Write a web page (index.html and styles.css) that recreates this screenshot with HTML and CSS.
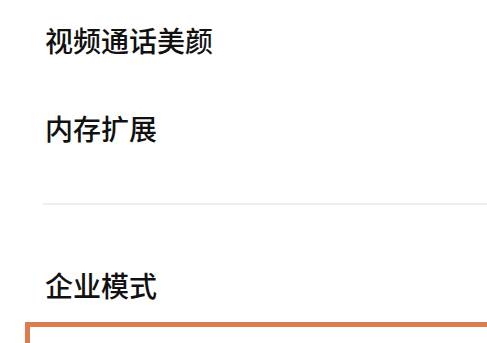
FILE: index.html
```html
<!DOCTYPE html>
<html lang="zh-CN">
<head>
<meta charset="utf-8">
<link rel="stylesheet" href="styles.css">
</head>
<body>
<div class="list">
  <div class="item item-first">视频通话美颜</div>
  <div class="item item-second">内存扩展</div>
  <div class="divider"></div>
  <div class="item item-third">企业模式</div>
  <div class="highlight"></div>
</div>
</body>
</html>
```
FILE: styles.css
```css
html, body {
  margin: 0;
  padding: 0;
  background: #ffffff;
  overflow: hidden;
}
.list {
  width: 487px;
  height: 343px;
  overflow: hidden;
  font-family: "Noto Sans CJK SC", "Noto Sans", sans-serif;
  color: #111111;
}
.item {
  height: 56px;
  display: flex;
  align-items: center;
  padding-left: 45px;
  font-size: 28px;
  font-weight: 500;
  line-height: 1;
}
.item-first {
  margin-top: 12px;
}
.item-second {
  margin-top: 32px;
}
.divider {
  margin-top: 47px;
  margin-left: 43px;
  height: 2px;
  background: #efefef;
}
.item-third {
  margin-top: 52px;
}
.highlight {
  margin-top: 9px;
  margin-left: 25px;
  margin-right: -20px;
  height: 60px;
  border: 5px solid #df7a50;
}
```
